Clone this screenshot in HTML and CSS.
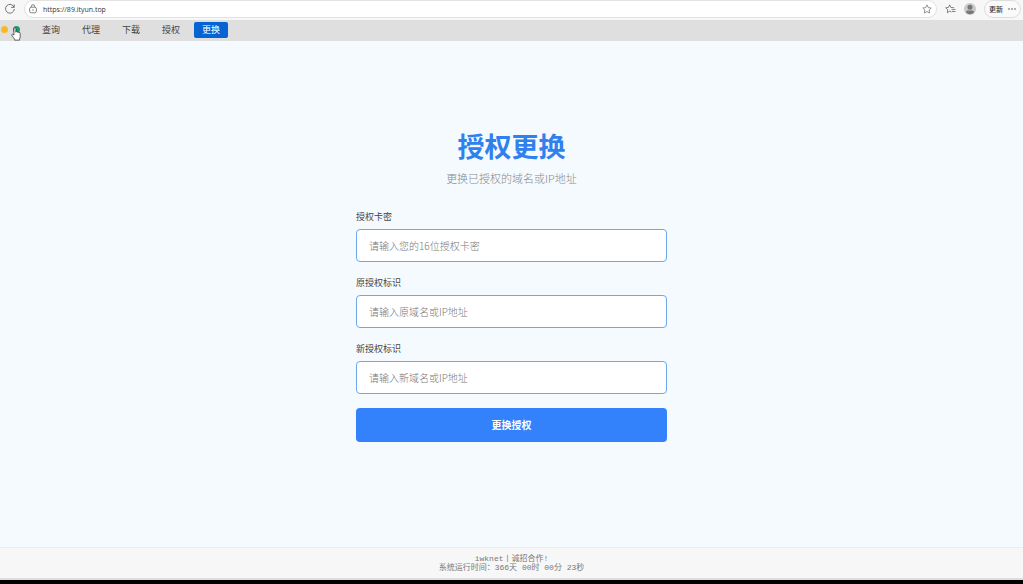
FILE: index.html
```html
<!DOCTYPE html>
<html lang="zh-CN">
<head>
    <meta charset="UTF-8">
    <meta name="viewport" content="width=device-width, initial-scale=1.0">
    <title>授权更换</title>
    <link rel="stylesheet" href="styles.css">
</head>
<body>
    <div class="toolbar">
        <button class="icon-btn" type="button" aria-label="刷新">
            <svg width="12" height="12" viewBox="0 0 12 12"><path d="M10 4.200A4.400 4.400 0 1 0 10.300 6M10.200 1.400v3H7.200" fill="none" stroke="#666" stroke-width="0.9"/></svg>
        </button>
        <div class="address">
            <svg width="8" height="10" viewBox="0 0 8 10"><rect x="0.600" y="3.200" width="6.800" height="5.600" rx="1.700" fill="none" stroke="#666" stroke-width="0.8"/><path d="M2.300 3.200V2.400a1.700 1.700 0 0 1 3.400 0v.8" fill="none" stroke="#666" stroke-width="0.8"/><circle cx="4" cy="6" r="0.7" fill="#666"/></svg>
            <input class="url" type="text" value="https://89.ityun.top" aria-label="地址">
            <button class="icon-btn" type="button" aria-label="收藏">
                <svg width="10" height="10" viewBox="0 0 10 10"><path d="M5 .9l1.300 2.700 2.900.4-2.100 2 .5 3L5 7.600 2.400 9l.5-3-2.100-2 2.900-.4z" fill="none" stroke="#777" stroke-width="0.8" stroke-linejoin="round"/></svg>
            </button>
        </div>
        <button class="icon-btn" type="button" aria-label="收藏夹">
            <svg width="11" height="10" viewBox="0 0 11 10"><path d="M6.500 8L4.700 7.200 2.300 8.700l.5-2.900L.7 3.800l2.800-.4L4.700.9l1.200 2.500 3.300.4" fill="none" stroke="#666" stroke-width="0.8" stroke-linejoin="round"/><path d="M6.500 5.600h4M7 7.500h3.500" stroke="#666" stroke-width="0.8"/></svg>
        </button>
        <button class="icon-btn" type="button" aria-label="个人资料">
            <svg width="12" height="12" viewBox="0 0 12 12"><circle cx="6" cy="6" r="6" fill="#cbc9c8"/><circle cx="6" cy="4.300" r="2.500" fill="#777"/><path d="M2 9.300C2 7.800 3 7.400 4 7.400h4c1 0 2 .4 2 1.900-1 1.200-2.400 1.900-4 1.900s-3-.7-4-1.900z" fill="#777"/></svg>
        </button>
        <button class="update-btn" type="button">更新
            <svg width="8" height="2" viewBox="0 0 8 2" fill="#555"><circle cx="1" cy="1" r=".8"/><circle cx="4" cy="1" r=".8"/><circle cx="7" cy="1" r=".8"/></svg>
        </button>
    </div>

    <nav class="navbar">
        <div class="dots">
            <span class="dot yellow"></span>
            <span class="dot green"></span>
            <svg class="cursor" width="10" height="14" viewBox="0 0 9 13"><path d="M2.600 7.500V1.500a.9.900 0 0 1 1.800 0v3.400l.1-.7a.8.800 0 0 1 1.400.3v.4a.7.700 0 0 1 1.300.3v.4a.6.600 0 0 1 1.200.3v3.200c0 1-.6 1.500-.6 2.300v.8H3.200v-.8C2.700 10.300 1.500 9.300.6 7.700c-.5-.9.6-1.400 1.200-.8z" fill="#fff" stroke="#333" stroke-width="0.700"/></svg>
        </div>
        <a href="#">查询</a>
        <a href="#">代理</a>
        <a href="#">下载</a>
        <a href="#">授权</a>
        <a href="#" class="active">更换</a>
    </nav>

    <main class="main">
        <div class="container">
            <h1>授权更换</h1>
            <p class="subtitle">更换已授权的域名或IP地址</p>
            <form>
                <div class="form-group">
                    <label for="card">授权卡密</label>
                    <input type="text" id="card" placeholder="请输入您的16位授权卡密">
                </div>
                <div class="form-group">
                    <label for="old">原授权标识</label>
                    <input type="text" id="old" placeholder="请输入原域名或IP地址">
                </div>
                <div class="form-group">
                    <label for="new">新授权标识</label>
                    <input type="text" id="new" placeholder="请输入新域名或IP地址">
                </div>
                <button class="submit-btn" type="submit">更换授权</button>
            </form>
        </div>
    </main>

    <footer class="footer">
        <div>iwknet丨诚招合作!</div>
        <div>系统运行时间：366天 00时 00分 23秒</div>
    </footer>
</body>
</html>
```
FILE: styles.css
```css
* {
    box-sizing: border-box;
}
body {
    margin: 0;
    min-height: 100vh;
    display: flex;
    flex-direction: column;
    background: #f5faff;
    border-bottom: 4px solid #000;
    font-family: "Noto Sans CJK SC", sans-serif;
}
button, input {
    font-family: inherit;
}

/* browser bar */
.toolbar {
    display: flex;
    align-items: center;
    gap: 8px;
    height: 20px;
    padding: 0 2px 2px 4px;
    background: #f7f7f7;
}
.icon-btn {
    display: flex;
    padding: 0;
    border: 0;
    background: none;
}
.address {
    flex: 1;
    display: flex;
    align-items: center;
    gap: 6px;
    height: 18px;
    padding: 0 4px;
    background: #fff;
    border: 1px solid #e2e2e2;
    border-radius: 9px;
}
.url {
    flex: 1;
    min-width: 0;
    padding: 0;
    border: 0;
    outline: none;
    background: none;
    font-family: "Open Sans", sans-serif;
    font-size: 7px;
    color: #333;
}
.update-btn {
    display: flex;
    align-items: center;
    gap: 5px;
    height: 18px;
    padding: 0 4px;
    background: #fafafa;
    border: 1px solid #ddd;
    border-radius: 9px;
    font-size: 7px;
    font-weight: 500;
    color: #333;
    white-space: nowrap;
}

/* nav */
.navbar {
    display: flex;
    align-items: center;
    gap: 6px;
    height: 21px;
    padding-bottom: 2px;
    background: #dfdfdf;
}
.navbar a {
    padding: 0 8px;
    border-radius: 2px;
    font-size: 9px;
    line-height: 16px;
    color: #444;
    text-decoration: none;
}
.navbar a.active {
    background: #0563d2;
    color: #fff;
}
.dots {
    position: relative;
    display: flex;
    gap: 5px;
    width: 28px;
    padding-left: 1px;
}
.dot {
    width: 7px;
    height: 7px;
    border-radius: 50%;
}
.yellow {
    background: #fbb829;
}
.green {
    background: #12a36d;
}
.cursor {
    position: absolute;
    left: 11px;
    top: 1px;
}

/* form */
.main {
    flex: 1;
    display: flex;
    align-items: center;
    justify-content: center;
    padding: 0 16px 17px;
}
.container {
    width: 100%;
    max-width: 311px;
}
h1 {
    margin: 0 0 8px;
    font-size: 27px;
    line-height: 32px;
    font-weight: 700;
    text-align: center;
    color: #3080ee;
}
.subtitle {
    margin: 0 0 24px;
    font-size: 11px;
    line-height: 16px;
    font-weight: 300;
    text-align: center;
    color: #888;
}
.form-group {
    margin-bottom: 14px;
}
.form-group label {
    display: block;
    margin-bottom: 5px;
    font-size: 9px;
    line-height: 14px;
    color: #444;
}
.form-group input {
    display: block;
    width: 100%;
    height: 33px;
    padding: 0 12px;
    background: #fff;
    border: 1px solid #6ba8ee;
    border-radius: 4px;
    font-size: 10px;
    color: #333;
}
.form-group input::placeholder {
    color: #777;
    font-weight: 300;
}
.submit-btn {
    display: block;
    width: 100%;
    height: 34px;
    border: 0;
    border-radius: 4px;
    background: #3382fc;
    font-size: 10px;
    font-weight: 700;
    color: #fff;
}

/* footer */
.footer {
    height: 33px;
    padding-top: 6px;
    background: #f7f7f7;
    border-top: 1px solid #ececf0;
    border-bottom: 2px solid #ddd;
    font-family: "Liberation Mono", "Noto Sans CJK SC", monospace;
    font-size: 8px;
    line-height: 9px;
    text-align: center;
    color: #777;
}
```
